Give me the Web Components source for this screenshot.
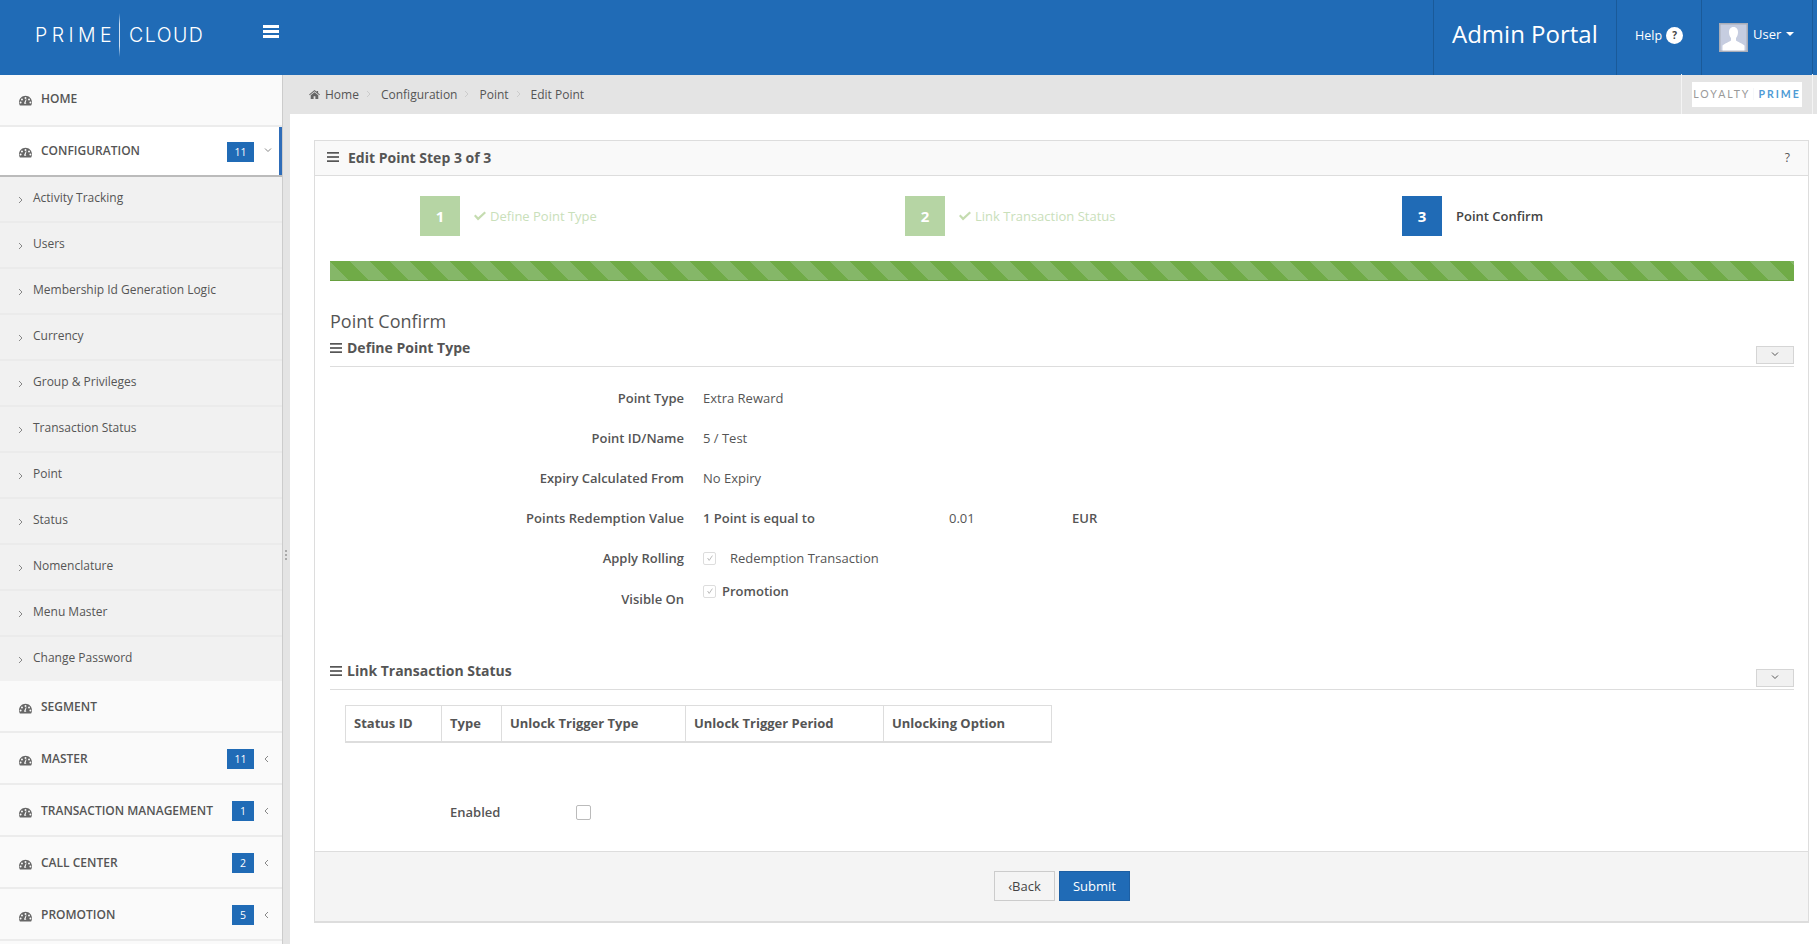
<!DOCTYPE html>
<html lang="en">
<head>
<meta charset="utf-8">
<title>Edit Point</title>
<style>
html, body { margin: 0; height: 100%; }
body { font-family: "Open Sans", sans-serif; font-size: 12px; color: #555; background: #fff; overflow: hidden; }
</style>
</head>
<body>
<app-shell>
	<top-bar slot="top"></top-bar>
	<side-nav slot="side">
		<nav-item label="HOME"></nav-item>
		<nav-item label="CONFIGURATION" badge="11" open></nav-item>
		<sub-item>Activity Tracking</sub-item>
		<sub-item>Users</sub-item>
		<sub-item>Membership Id Generation Logic</sub-item>
		<sub-item>Currency</sub-item>
		<sub-item>Group &amp; Privileges</sub-item>
		<sub-item>Transaction Status</sub-item>
		<sub-item>Point</sub-item>
		<sub-item>Status</sub-item>
		<sub-item>Nomenclature</sub-item>
		<sub-item>Menu Master</sub-item>
		<sub-item last>Change Password</sub-item>
		<nav-item label="SEGMENT" low></nav-item>
		<nav-item label="MASTER" badge="11" low></nav-item>
		<nav-item label="TRANSACTION MANAGEMENT" badge="1" low></nav-item>
		<nav-item label="CALL CENTER" badge="2" low></nav-item>
		<nav-item label="PROMOTION" badge="5" low></nav-item>
	</side-nav>
	<bread-bar slot="crumbs"></bread-bar>
	<wizard-panel>
		<step-row></step-row>
		<section-head title-text="Point Confirm" label="Define Point Type"></section-head>
		<info-rows></info-rows>
		<section-head label="Link Transaction Status"></section-head>
		<status-table></status-table>
		<enabled-row></enabled-row>
	</wizard-panel>
</app-shell>

<script>
const gauge = `<svg viewBox="0 0 24 20" width="13" height="11" fill="#666"><path fill-rule="evenodd" d="M12 1C5.4 1 0 6.4 0 13c0 2.2.6 4.2 1.6 6h20.8c1-1.8 1.600-3.800 1.600-6 0-6.600-5.400-12-12-12zM12 3.500a1.800 1.800 0 1 1 0 3.600 1.800 1.800 0 0 1 0-3.600zM5.500 6.500a1.800 1.800 0 1 1 0 3.600 1.800 1.800 0 0 1 0-3.600zM18.500 6.500a1.800 1.800 0 1 1 0 3.600 1.800 1.800 0 0 1 0-3.600zM3 12a1.800 1.800 0 1 1 0 3.600A1.800 1.800 0 0 1 3 12zM21 12a1.800 1.800 0 1 1 0 3.600 1.800 1.800 0 0 1 0-3.600zM9.600 14.200l3-6.400 1.300.5-1.700 5.700c.8.500 1.300 1.300 1.300 2.200H9.500c0-.7 0-1.400.1-2z"/></svg>`;
const bars = (w, c) => `<svg viewBox="0 0 12 10" width="${w}" height="${w * 10 / 12}" fill="${c}"><rect width="12" height="1.700"/><rect y="4.150" width="12" height="1.700"/><rect y="8.300" width="12" height="1.700"/></svg>`;
const chev = (dir, c) => {
	const d = { right: "M1 1l3 3-3 3", left: "M4 1L1 4l3 3", down: "M1 1.500l3 3 3-3" }[dir];
	return `<svg viewBox="0 0 8 8" width="8" height="8" fill="none" stroke="${c}" stroke-width="1"><path d="${d}"/></svg>`;
};

class AppShell extends HTMLElement {
	constructor() {
		super();
		this.attachShadow({ mode: "open" }).innerHTML = `
		<style>
			:host { display: grid; grid-template-columns: 283px 7px 1fr; grid-template-rows: 75px 39px 1fr; height: 944px; width: 1817px; overflow: hidden; }
			.top { grid-column: 1 / 4; }
			.side { grid-row: 2 / 4; }
			.strip { grid-row: 2 / 4; background: #e4e4e4; position: relative; }
			.strip i { position: absolute; left: 2px; top: 475px; width: 2px; height: 10px; background-image: linear-gradient(#aaa 50%, transparent 50%); background-size: 2px 4px; }
			.crumbs { grid-column: 3; }
			.main { grid-column: 3; padding: 26px 8px 21px 24px; min-height: 0; display: flex; }
		</style>
		<div class="top"><slot name="top"></slot></div>
		<div class="side"><slot name="side"></slot></div>
		<div class="strip"><i></i></div>
		<div class="crumbs"><slot name="crumbs"></slot></div>
		<div class="main"><slot></slot></div>`;
	}
}

class TopBar extends HTMLElement {
	constructor() {
		super();
		this.attachShadow({ mode: "open" }).innerHTML = `
		<style>
			:host { display: flex; height: 75px; background: #206bb6; color: #fff; align-items: stretch; }
			.logo { width: 263px; display: flex; align-items: center; padding: 0 0 5px 35px; box-sizing: border-box; font: 300 19.500px "Inter", sans-serif; }
			.logo b { font-weight: 300; width: 84px; letter-spacing: 4.400px; }
			.logo i { width: 1px; height: 44px; margin-right: 9px; background: linear-gradient(transparent, #cfe0f2 25%, #cfe0f2 75%, transparent); }
			.logo span { letter-spacing: 1.500px; }
			.burger { padding-top: 25px; flex: 1; }
			.burger svg { display: block; }
			.cell { border-left: 1px solid #1a5a99; display: flex; align-items: center; }
			.portal { width: 183px; padding: 0 0 8px 18px; box-sizing: border-box; font-size: 24px; }
			.help { width: 85px; padding: 0 0 5px 18px; box-sizing: border-box; font-size: 12.500px; gap: 4px; }
			.help span { width: 17px; height: 17px; border-radius: 50%; background: #fff; color: #444; font-size: 10px; font-weight: 700; display: flex; align-items: center; justify-content: center; }
			.user { width: 111px; padding-left: 17px; box-sizing: border-box; font-size: 13px; }
			.user span { margin: 0 5px; position: relative; top: -4px; }
			.avatar { width: 29px; height: 29px; display: block; }
			.caret { width: 0; height: 0; border: 4px solid transparent; border-top-color: #fff; border-bottom: 0; position: relative; top: -4px; }
			.end { width: 4px; border-left: 1px solid #1a5a99; }
		</style>
		<div class="logo"><b>PRIME</b><i></i><span>CLOUD</span></div>
		<div class="burger"><svg width="16" height="13" fill="#fff"><rect width="16" height="3"/><rect y="5" width="16" height="3"/><rect y="10" width="16" height="3"/></svg></div>
		<div class="cell portal">Admin Portal</div>
		<div class="cell help">Help<span>?</span></div>
		<div class="cell user">
			<svg class="avatar" viewBox="0 0 29 29"><rect width="29" height="29" fill="#a9adb8"/><rect x="1.500" y="1.500" width="26" height="26" fill="#c6cde0"/><path fill="#fff" d="M14.500 4c-3.200 0-4.700 2.500-4.500 5.500.1 2.500 1 4.500 2 5.500v2.500c-1.500 1.500-6 2.500-8.500 5V27.500h22v-5c-2.500-2.500-7-3.500-8.500-5V15c1-1 1.900-3 2-5.500.2-3-1.300-5.500-4.500-5.500z"/></svg>
			<span>User</span><div class="caret"></div>
		</div>
		<div class="end"></div>`;
	}
}

class SideNav extends HTMLElement {
	constructor() {
		super();
		this.attachShadow({ mode: "open" }).innerHTML = `
		<style>
			:host { display: block; background: #fafafa; border-right: 1px solid #ccc; height: 869px; overflow: hidden; box-sizing: border-box; }
		</style><slot></slot>`;
	}
}

class NavItem extends HTMLElement {
	connectedCallback() {
		const badge = this.getAttribute("badge");
		const open = this.hasAttribute("open");
		const noArrow = !badge;
		this.attachShadow({ mode: "open" }).innerHTML = `
		<style>
			:host { display: flex; align-items: center; box-sizing: border-box; height: 52px; padding: 0 0 2px 19px; border-bottom: 2px solid #ececec; background: #fafafa; font-weight: 600; font-size: 12px; color: #555; }
			:host([open]) { background: #fff; border-bottom: 2px solid #bbb; box-shadow: inset -3px 0 0 #2e6cb8; height: 50px; padding-bottom: 0; }
			:host([low]) { padding-top: 4px; }
			:host([open]) .b { position: relative; top: 1px; }
			svg.g { margin-right: 9px; flex: none; position: relative; top: 1px; }
			.t { flex: 1; position: relative; top: -1px; }
			.b { background: #206bb6; color: #fff; font-size: 10.500px; font-weight: 400; height: 20px; min-width: 22px; padding: 0 3px; box-sizing: border-box; display: flex; align-items: center; justify-content: center; }
			.b.w { min-width: 27px; }
			.a { width: 28px; display: flex; justify-content: center; }
		</style>
		${gauge}
		<span class="t">${this.getAttribute("label")}</span>
		${noArrow ? "" : `<span class="b ${badge.length > 1 ? "w" : ""}">${badge}</span><span class="a">${chev(open ? "down" : "left", "#888")}</span>`}`;
		this.shadowRoot.querySelector("svg").classList.add("g");
	}
}

class SubItem extends HTMLElement {
	constructor() {
		super();
		this.attachShadow({ mode: "open" }).innerHTML = `
		<style>
			:host { display: flex; align-items: center; height: 46px; box-sizing: border-box; padding-left: 18px; background: #f1f1f1; border-bottom: 2px solid #ebebeb; font-size: 12px; color: #555; }
			:host([last]) { height: 44px; border-bottom: 0; }
			svg { margin-right: 7px; position: relative; top: 1px; }
			span { position: relative; top: -2px; }
		</style>
		${chev("right", "#888")}<span><slot></slot></span>`;
	}
}

class BreadBar extends HTMLElement {
	constructor() {
		super();
		this.attachShadow({ mode: "open" }).innerHTML = `
		<style>
			:host { display: flex; height: 39px; background: #e4e4e4; align-items: center; padding: 0 0 1px 19px; font-size: 12px; color: #555; box-sizing: border-box; }
			.home { margin-right: 5px; }
			.sep { margin: 0 7px; display: flex; }
			.brand { margin: -1px 4px -1px auto; align-self: stretch; width: 132px; box-sizing: border-box; border-left: 1px solid #f4f4f4; border-right: 1px solid #f4f4f4; display: flex; align-items: center; padding: 0 0 0 10px; }
			.brand div { background: #fff; width: 110px; height: 25px; display: flex; align-items: center; justify-content: center; font: 400 10.500px "Lato", sans-serif; letter-spacing: 2px; color: #999; }
			.brand b { font-weight: 700; color: #4f9bd5; padding-left: 4px; margin-left: 3px; border-left: 1px solid #f6f8fa; }
		</style>
		<svg class="home" viewBox="0 0 12 10" width="11" height="9" fill="#666"><path d="M6 0L0 5l.6.7L6 1.300l5.400 4.400.6-.7-2-1.700V1H8.500v1L6 0zM1.800 5.800V10H5V7h2v3h3.200V5.800L6 2.400z"/></svg>
		<span>Home</span><span class="sep">${chev("right", "#ccc")}</span>
		<span>Configuration</span><span class="sep">${chev("right", "#ccc")}</span>
		<span>Point</span><span class="sep">${chev("right", "#ccc")}</span>
		<span>Edit Point</span>
		<div class="brand"><div>LOYALTY<b>PRIME</b></div></div>`;
	}
}

class WizardPanel extends HTMLElement {
	constructor() {
		super();
		this.attachShadow({ mode: "open" }).innerHTML = `
		<style>
			:host { display: flex; flex-direction: column; flex: 1; box-sizing: border-box; height: 783px; border: 1px solid #ddd; border-bottom-width: 2px; }
			header { height: 35px; flex: none; box-sizing: border-box; background: #f9f9f9; border-bottom: 1px solid #ddd; display: flex; align-items: center; padding: 0 18px 2px 12px; font-size: 14px; font-weight: 700; color: #555; }
			header svg { margin-right: 9px; }
			header span { flex: 1; }
			header em { font-style: normal; font-weight: 400; font-size: 12px; }
			.body { flex: 1; padding: 20px 14px 0 15px; min-height: 0; }
			footer { height: 70px; flex: none; background: #f4f4f4; border-top: 1px solid #ddd; display: flex; align-items: center; justify-content: center; gap: 4px; box-sizing: border-box; padding: 0 0 2px 1px; }
			button { font: 400 13px "Open Sans", sans-serif; height: 30px; box-sizing: border-box; cursor: pointer; padding: 0; }
			.back { width: 61px; background: #f4f4f4; border: 1px solid #ccc; color: #444; }
			.submit { width: 71px; background: #206bb6; border: 1px solid #1d5fa3; color: #fff; }
		</style>
		<header>${bars(12, "#555")}<span>Edit Point Step 3 of 3</span><em>?</em></header>
		<div class="body"><slot></slot></div>
		<footer><button class="back">&lsaquo;Back</button><button class="submit">Submit</button></footer>`;
	}
}

class StepRow extends HTMLElement {
	constructor() {
		super();
		const step = (n, text, done, w) => `
			<div class="step ${done ? "done" : ""}" style="width:${w}px">
				<div class="n">${n}</div>
				<div class="t">${done ? `<svg viewBox="0 0 12 10" width="12" height="10" fill="#c5dcb0"><path d="M1.500 3.500L0 5l4 4.500L12 2l-1.500-1.500L4.200 6.300z"/></svg>` : ""}${text}</div>
			</div>`;
		this.attachShadow({ mode: "open" }).innerHTML = `
		<style>
			:host { display: block; }
			.steps { display: flex; padding-left: 90px; height: 40px; }
			.step { display: flex; align-items: center; flex: none; }
			.n { width: 40px; height: 40px; background: #206bb6; color: #fff; font-weight: 700; font-size: 15px; display: flex; align-items: center; justify-content: center; margin-right: 14px; flex: none; }
			.t { font-size: 13px; font-weight: 600; color: #444; display: flex; align-items: center; gap: 4px; white-space: nowrap; }
			.done .n { background: #b6d5a4; }
			.done .t { color: #c9e0ba; font-weight: 400; }
			.bar { height: 20px; margin-top: 25px; background-color: #70ab47; background-image: linear-gradient(45deg, transparent 25%, #85b768 25%, #85b768 50%, transparent 50%, transparent 75%, #85b768 75%); background-size: 40px 40px; box-shadow: inset 0 -1px 0 #67a03f; }
		</style>
		<div class="steps">
			${step(1, "Define Point Type", true, 485)}
			${step(2, "Link Transaction Status", true, 497)}
			${step(3, "Point Confirm", false, 200)}
		</div>
		<div class="bar"></div>`;
	}
}

class SectionHead extends HTMLElement {
	connectedCallback() {
		const title = this.getAttribute("title-text");
		this.attachShadow({ mode: "open" }).innerHTML = `
		<style>
			:host { display: block; }
			h3 { margin: 28px 0 0; font-size: 18px; font-weight: 400; color: #555; line-height: 25px; }
			.row { display: flex; align-items: center; height: 33px; border-bottom: 1px solid #ddd; box-sizing: border-box; font-weight: 700; font-size: 14px; color: #555; padding-bottom: 5px; }
			.row svg { margin-right: 5px; }
			.row span { flex: 1; }
			.row button { width: 38px; height: 18px; border: 1px solid #d5d5d5; background: #f1f1f1; padding: 0; display: flex; align-items: center; justify-content: center; align-self: flex-end; margin-bottom: -3px; }
			.row button svg { margin: 0; }
		</style>
		${title ? `<h3>${title}</h3>` : ""}
		<div class="row">${bars(12, "#555")}<span>${this.getAttribute("label")}</span><button>${chev("down", "#555")}</button></div>`;
	}
}

function tick() {
	return `<svg viewBox="0 0 10 10" width="8" height="8" fill="none" stroke="#aaa" stroke-width="1"><path d="M2 5l2 3 4-6"/></svg>`;
}

class InfoRows extends HTMLElement {
	constructor() {
		super();
		this.attachShadow({ mode: "open" }).innerHTML = `
		<style>
			:host { display: grid; grid-template-columns: 354px 1fr; column-gap: 19px; grid-auto-rows: 40px; padding: 11px 0 0; font-size: 13px; color: #555; align-items: center; height: 290px; box-sizing: border-box; }
			.l { text-align: right; font-weight: 600; }
			.v { display: flex; align-items: center; }
			.redeem b { font-weight: 600; width: 246px; }
			.redeem span { width: 123px; }
			.redeem em { font-style: normal; font-weight: 600; }
			.box { width: 11px; height: 11px; border: 1px solid #ddd; border-radius: 2px; margin-right: 14px; display: flex; align-items: center; justify-content: center; flex: none; }
			.promo { margin-bottom: 14px; font-weight: 600; }
			.promo .box { margin-right: 6px; }
			.vis { margin-top: 1px; }
		</style>
		<div class="l">Point Type</div><div class="v">Extra Reward</div>
		<div class="l">Point ID/Name</div><div class="v">5 / Test</div>
		<div class="l">Expiry Calculated From</div><div class="v">No Expiry</div>
		<div class="l">Points Redemption Value</div><div class="v redeem"><b>1 Point is equal to</b><span>0.01</span><em>EUR</em></div>
		<div class="l">Apply Rolling</div><div class="v"><span class="box">${tick()}</span>Redemption Transaction</div>
		<div class="l vis">Visible On</div><div class="v promo"><span class="box">${tick()}</span>Promotion</div>`;
	}
}

class StatusTable extends HTMLElement {
	constructor() {
		super();
		const cols = [["Status ID", 96], ["Type", 60], ["Unlock Trigger Type", 184], ["Unlock Trigger Period", 198], ["Unlocking Option", 168]];
		this.attachShadow({ mode: "open" }).innerHTML = `
		<style>
			:host { display: block; padding: 15px 0 0 15px; }
			table { border-collapse: collapse; font-size: 13px; font-weight: 700; color: #555; table-layout: fixed; width: 706px; }
			th { text-align: left; height: 36px; box-sizing: border-box; padding: 0 8px; border: 1px solid #ddd; border-bottom: 2px solid #ddd; font-weight: 700; }
		</style>
		<table><tr>${cols.map(c => `<th style="width:${c[1]}px">${c[0]}</th>`).join("")}</tr></table>`;
	}
}

class EnabledRow extends HTMLElement {
	constructor() {
		super();
		this.attachShadow({ mode: "open" }).innerHTML = `
		<style>
			:host { display: flex; align-items: center; padding: 60px 0 0 120px; font-size: 13px; font-weight: 600; color: #555; }
			span { width: 126px; }
			i { width: 15px; height: 15px; box-sizing: border-box; border: 1px solid #bbb; border-radius: 2px; background: #fff; margin-top: 2px; }
		</style>
		<span>Enabled</span><i></i>`;
	}
}

customElements.define("app-shell", AppShell);
customElements.define("top-bar", TopBar);
customElements.define("side-nav", SideNav);
customElements.define("nav-item", NavItem);
customElements.define("sub-item", SubItem);
customElements.define("bread-bar", BreadBar);
customElements.define("wizard-panel", WizardPanel);
customElements.define("step-row", StepRow);
customElements.define("section-head", SectionHead);
customElements.define("info-rows", InfoRows);
customElements.define("status-table", StatusTable);
customElements.define("enabled-row", EnabledRow);
</script>
</body>
</html>
